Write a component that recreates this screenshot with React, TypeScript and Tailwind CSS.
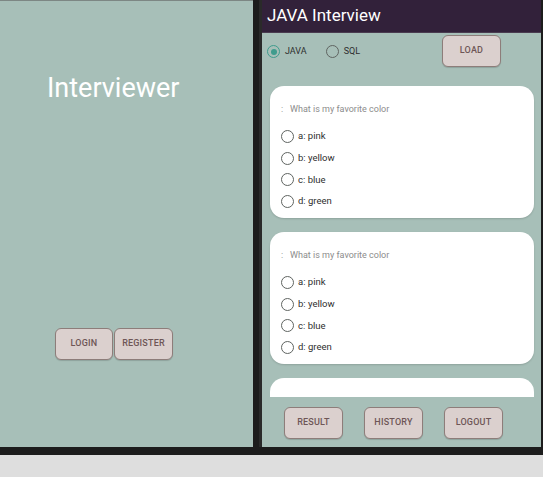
import React from "react";

const options = ["a: pink", "b: yellow", "c: blue", "d: green"];

const AppButton = ({ label, className = "" }: { label: string; className?: string }) => (
  <button
    className={`h-[32px] rounded-[6px] border border-[#8d7d7a] bg-[#dbd0ce] text-[9px] font-medium tracking-[0.2px] text-[#6e5656] shadow-[0_1px_1px_rgba(0,0,0,0.15)] ${className}`}
  >
    {label}
  </button>
);

const Radio = ({ checked = false }: { checked?: boolean }) => (
  <span
    className={`flex h-[13px] w-[13px] items-center justify-center rounded-full border-[1.5px] ${
      checked ? "border-[#3f9c8d]" : "border-[#5f6461]"
    }`}
  >
    {checked && <span className="h-[6px] w-[6px] rounded-full bg-[#3f9c8d]" />}
  </span>
);

const QuestionCard = () => (
  <div className="h-[132px] shrink-0 rounded-[14px] bg-white pl-[11px] pt-[18px] shadow-[0_1px_2px_rgba(0,0,0,0.15)]">
    <div className="flex h-[12px] items-center text-[9px] text-[#8c8c8c]">
      <span className="w-[9px]">:</span>
      <span>What is my favorite color</span>
    </div>
    <div className="mt-[14px] flex flex-col gap-[8.6px]">
      {options.map((o) => (
        <div key={o} className="flex h-[13px] items-center gap-[4px] text-[9.5px] text-[#2e2e2e]">
          <Radio />
          <span>{o}</span>
        </div>
      ))}
    </div>
  </div>
);

export default function App() {
  return (
    <div
      className="flex h-[477px] w-[543px] flex-col bg-[#dedede]"
      style={{ fontFamily: "Roboto, 'Noto Sans', sans-serif" }}
    >
      <div className="flex h-[455px] items-start bg-[#1c1c1c]">
        {/* login screen */}
        <div className="flex h-[447px] w-[253px] flex-col border-t border-[#7d8784] bg-[#a7bfb8]">
          <div className="mt-[71px] pl-[47px] text-[27px] leading-[32px] text-white">Interviewer</div>
          <div className="ml-[55px] mt-[224px] flex gap-[1px]">
            <AppButton label="LOGIN" className="w-[58px]" />
            <AppButton label="REGISTER" className="w-[59px]" />
          </div>
        </div>

        <div className="ml-[6px] h-[447px] w-[3px] bg-[#2a2a2a]" />

        {/* quiz screen */}
        <div className="flex h-[447px] w-[279px] flex-col bg-[#a7bfb8]">
          <div className="flex h-[33px] items-center border-b border-[#4a3c50] bg-[#32213a] pl-[5px] text-[17px] text-white">
            JAVA Interview
          </div>
          <div className="flex h-[34px] items-start">
            <div className="mt-[12px] flex items-center pl-[5px] text-[9px] text-[#2e2e2e]">
              <Radio checked />
              <span className="ml-[5px]">JAVA</span>
              <span className="ml-[19px]">
                <Radio />
              </span>
              <span className="ml-[5px]">SQL</span>
            </div>
            <AppButton label="LOAD" className="ml-auto mr-[40px] mt-[2px] w-[59px]" />
          </div>
          <div className="mt-[19px] flex h-[311px] flex-col gap-[14px] overflow-hidden pl-[8px] pr-[7px]">
            <QuestionCard />
            <QuestionCard />
            <div className="h-[132px] shrink-0 rounded-[14px] bg-white" />
          </div>
          <div className="mt-[10px] flex gap-[21px] pl-[22px]">
            <AppButton label="RESULT" className="w-[59px]" />
            <AppButton label="HISTORY" className="w-[59px]" />
            <AppButton label="LOGOUT" className="w-[59px]" />
          </div>
        </div>
      </div>
    </div>
  );
}
